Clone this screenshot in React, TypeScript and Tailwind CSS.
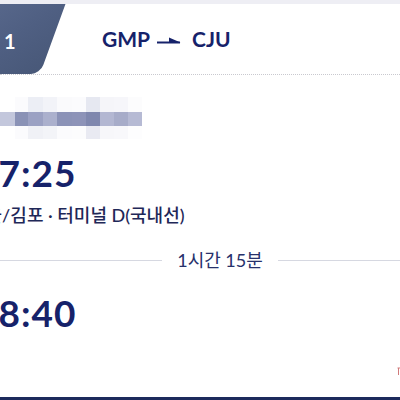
const navy = 'text-[#16226a]';

const mosaic: string[][] = [
  ['#ffffff', '#fbfbfd', '#eceef5', '#f2f3f8', '#fafafc', '#fbfbfd', '#e6e8f1', '#f5f5f9', '#f6f6fa', '#fcfcfd'],
  ['#c3c7dc', '#8a92b6', '#9ba1c3', '#abb0cd', '#8b92b7', '#8d93b8', '#7f87ae', '#b3b7d2', '#a7acc9', '#b6bad4'],
  ['#ffffff', '#fbfbfd', '#f0f1f6', '#f3f4f8', '#fbfbfd', '#fcfcfd', '#e9eaf2', '#f7f7fa', '#f8f8fb', '#fdfdfe'],
];
const colWidths = ['w-[15px]', 'w-[13px]', 'w-[15px]', 'w-[14px]', 'w-[15px]', 'w-[14px]', 'w-[14px]', 'w-[14px]', 'w-[14px]', 'w-[14px]'];
const rowHeights = ['h-[15px]', 'h-[14px]', 'h-[13px]'];

function RouteArrow() {
  return (
    <svg width="24" height="8" viewBox="0 0 24 8" className="mx-[7px] mt-[2px]">
      <path d="M0 6.5H23" stroke="#16226a" strokeWidth="2" />
      <path d="M12 1.5L23.5 6.5H12Z" fill="#16226a" />
    </svg>
  );
}

export default function App() {
  return (
    <div className="relative w-[400px] h-[400px] overflow-hidden bg-white border-b-[3px] border-[#1d2a5c] font-['Lato','Noto_Sans_CJK_KR',sans-serif]">
      <div className="h-[4px] bg-[#eeeef4]" />

      <header className="flex items-center h-[71px] border-b border-dotted border-[#c9c9cf]">
        <div className="relative h-[70px] w-[66px] flex items-center">
          <div className="absolute inset-y-0 left-[-40px] w-[80px] origin-bottom-left -skew-x-20 rounded-br-[9px] bg-linear-to-br from-[#58688c] via-[#4f5f82] to-[#485878]" />
          <span className="relative pl-[4px] pt-[3px] text-[20px] font-bold text-white">1</span>
        </div>
        <div className={`ml-[36px] flex items-center text-[21px] font-bold ${navy}`}>
          <span>GMP</span>
          <RouteArrow />
          <span className="ml-[4px]">CJU</span>
        </div>
      </header>

      <div className="mt-[22px] flex flex-col">
        {mosaic.map((row, r) => (
          <div key={r} className="flex">
            {row.map((c, i) => (
              <div key={i} className={`${colWidths[i]} ${rowHeights[r]}`} style={{ backgroundColor: c }} />
            ))}
          </div>
        ))}
      </div>

      <div className={`mt-[16px] -ml-[24px] text-[37px] leading-[36px] tracking-[1px] font-bold ${navy}`}>07:25</div>
      <div className="mt-[12px] -ml-[31px] text-[18px] leading-[24px] font-medium text-[#1f2858] whitespace-nowrap">
        서울/김포 · 터미널 D(국내선)
      </div>

      <div className="mt-[21px] -ml-[40px] w-[520px] flex items-center gap-[15px]">
        <div className="flex-1 h-px bg-[#d6d8e1]" />
        <span className="text-[18px] leading-[24px] text-[#27316b]">1시간 15분</span>
        <div className="flex-1 h-px bg-[#d6d8e1]" />
      </div>

      <div className={`mt-[23px] -ml-[24px] text-[37px] leading-[36px] tracking-[1px] font-bold ${navy}`}>08:40</div>
      <div className="mt-[12px] -ml-[33px] text-[18px] leading-[24px] font-medium text-[#1f2858] whitespace-nowrap">제주</div>

      <svg width="6" height="9" viewBox="0 0 6 9" className="absolute right-[-3px] top-[367px]">
        <path d="M0.5 1H5.5M1.5 1V8" stroke="#d07a7a" strokeWidth="1" fill="none" />
      </svg>
    </div>
  );
}
